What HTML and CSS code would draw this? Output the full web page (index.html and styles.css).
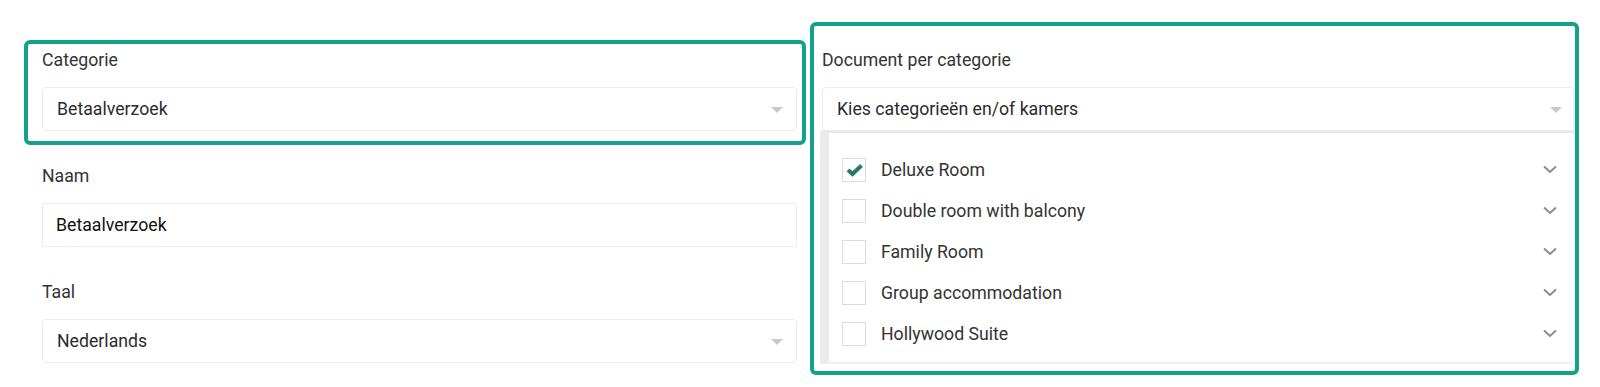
FILE: index.html
```html
<!DOCTYPE html>
<html>
<head>
  <meta charset="utf-8">
  <title>Document instellingen</title>
  <link rel="stylesheet" href="styles.css">
</head>

<body>
  <div class="page">
    <div class="col col-left">
      <div class="field marked">
        <label class="field-label">Categorie</label>
        <div class="select">
          <span class="select-value">Betaalverzoek</span>
          <span class="caret"></span>
        </div>
      </div>
      <div class="field">
        <label class="field-label" for="naam">Naam</label>
        <input class="text-input" type="text" id="naam" value="Betaalverzoek">
      </div>
      <div class="field">
        <label class="field-label">Taal</label>
        <div class="select">
          <span class="select-value">Nederlands</span>
          <span class="caret"></span>
        </div>
      </div>
    </div>

    <div class="col col-right marked">
      <label class="field-label">Document per categorie</label>
      <div class="select select-open">
        <span class="select-value">Kies categorieën en/of kamers</span>
        <span class="caret"></span>
      </div>
      <ul class="options">
        <li class="option">
          <span class="checkbox">
            <svg width="24" height="24" viewBox="0 0 24 24"><polyline points="6,12 10.5,16 19.5,7.5" fill="none" stroke="#247a6c" stroke-width="4"/></svg>
          </span>
          <span class="option-name">Deluxe Room</span>
          <svg class="chevron" width="14" height="9" viewBox="0 0 14 9"><polyline points="1,1.5 7,7 13,1.5" fill="none" stroke="#8c8c8c" stroke-width="2"/></svg>
        </li>
        <li class="option">
          <span class="checkbox"></span>
          <span class="option-name">Double room with balcony</span>
          <svg class="chevron" width="14" height="9" viewBox="0 0 14 9"><polyline points="1,1.5 7,7 13,1.5" fill="none" stroke="#8c8c8c" stroke-width="2"/></svg>
        </li>
        <li class="option">
          <span class="checkbox"></span>
          <span class="option-name">Family Room</span>
          <svg class="chevron" width="14" height="9" viewBox="0 0 14 9"><polyline points="1,1.5 7,7 13,1.5" fill="none" stroke="#8c8c8c" stroke-width="2"/></svg>
        </li>
        <li class="option">
          <span class="checkbox"></span>
          <span class="option-name">Group accommodation</span>
          <svg class="chevron" width="14" height="9" viewBox="0 0 14 9"><polyline points="1,1.5 7,7 13,1.5" fill="none" stroke="#8c8c8c" stroke-width="2"/></svg>
        </li>
        <li class="option">
          <span class="checkbox"></span>
          <span class="option-name">Hollywood Suite</span>
          <svg class="chevron" width="14" height="9" viewBox="0 0 14 9"><polyline points="1,1.5 7,7 13,1.5" fill="none" stroke="#8c8c8c" stroke-width="2"/></svg>
        </li>
      </ul>
    </div>
  </div>
</body>

</html>
```

FILE: styles.css
```css
body {
  margin: 0;
  background: #fff;
  font-family: Roboto, "Liberation Sans", sans-serif;
  font-size: 17.7px;
  color: #333;
}

.page {
  display: flex;
  align-items: flex-start;
  gap: 4px;
  padding: 22px 21px 0 24px;
}

.col-left {
  width: 782px;
  margin-top: 18px;
  display: flex;
  flex-direction: column;
  gap: 11px;
}

.col-right {
  flex: 1;
  padding: 22px 1px 7px 8px;
}

.field {
  border: 4px solid transparent;
  border-radius: 6px;
  padding: 4px 5px 10px 14px;
}

.marked {
  border: 4px solid #14a18b;
  border-radius: 6px;
}

.field-label {
  display: block;
  line-height: 24px;
  margin-bottom: 15px;
  color: #333;
}

.select {
  display: flex;
  align-items: center;
  height: 44px;
  box-sizing: border-box;
  border: 1px solid #ececec;
  border-radius: 4px;
  padding: 0 13px 0 14px;
  color: #2b2b2b;
}

.select-value {
  flex: 1;
}

.caret {
  width: 0;
  height: 0;
  border-left: 6px solid transparent;
  border-right: 6px solid transparent;
  border-top: 6px solid #c9c9c9;
  margin-top: 2px;
}

.select-open {
  border-radius: 4px 4px 0 0;
  padding-right: 11px;
}

.text-input {
  display: block;
  width: 100%;
  height: 44px;
  box-sizing: border-box;
  border: 1px solid #ececec;
  border-radius: 2px;
  padding: 0 13px;
  font: inherit;
  color: #111;
  outline: none;
}

.options {
  list-style: none;
  margin: 0 0 0 -2px;
  padding: 16px 17px 8px 13px;
  border-top: 2px solid #e8e8e8;
  border-left: 9px solid #ebebeb;
  border-bottom: 2px solid #f0f0f0;
}

.option {
  display: flex;
  align-items: center;
  height: 41px;
}

.checkbox {
  width: 24px;
  height: 24px;
  box-sizing: border-box;
  border: 1px solid #dcdcdc;
  margin-right: 15px;
  display: flex;
}

.checkbox svg {
  margin: -1px;
}

.option-name {
  flex: 1;
  color: #333;
}
```
